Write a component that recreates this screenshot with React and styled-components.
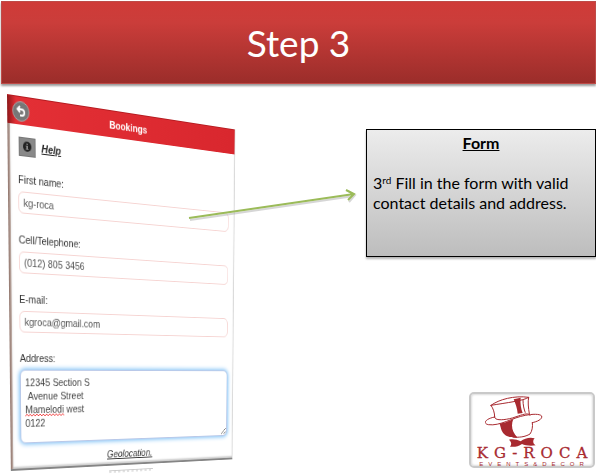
import React from "react";
import styled, { createGlobalStyle } from "styled-components";

const PageStyle = createGlobalStyle`
  *, *::before, *::after { box-sizing: border-box; }
  body { margin: 0; background: #fff; overflow-x: hidden; }
`;

const Slide = styled.div`
  min-height: 100vh;
  display: flex;
  flex-direction: column;
  font-family: Lato, "Open Sans", sans-serif;
  color: #000;
  overflow: hidden;
`;

const Banner = styled.header`
  display: flex;
  align-items: center;
  justify-content: center;
  height: 83px;
  margin: 1px 0 0 1px;
  border: 1px solid #be4b48;
  background: linear-gradient(#cf3b38 0%, #cb3d3a 25%, #9b2d2a 100%);
  box-shadow: 0 2px 2px rgba(0, 0, 0, 0.4);
`;

const Title = styled.h1`
  margin: 0;
  font-family: Lato, sans-serif;
  font-size: 37px;
  line-height: 44px;
  font-weight: 400;
  color: #fff;
`;

const Content = styled.main`
  position: relative;
  flex: 1;
  display: grid;
  grid-template-columns: minmax(0, 1fr) 230px;
  gap: 20px;
  padding: 10px 0 4px 7px;
`;

const Stage = styled.div`
  perspective: 1221px;
  perspective-origin: 123px 410px;
`;

const Phone = styled.form`
  position: relative;
  width: 301px;
  height: 378px;
  transform-origin: 0 0;
  transform: rotateX(-6deg) rotateY(36deg);
  background: #fff;
  border-right: 1px solid #d4d4d4;
  border-bottom: 2px solid #858585;
  box-shadow: inset 0 -2px 2px #ccc, inset 5px 0 3px -2px #ddd;
  font-family: "Liberation Sans", Arial, sans-serif;
  font-size: 11px;
  line-height: 16px;
  color: #333;

  &::before {
    content: "";
    position: absolute;
    inset: 0 auto 0 0;
    width: 3px;
    background: linear-gradient(90deg, #8d7067, #c5b5ae);
  }

  &::after {
    content: "";
    position: absolute;
    left: 124px;
    top: 383px;
    width: 60px;
    height: 3px;
    border-top: 1px solid #ccc;
    background: repeating-linear-gradient(90deg, #e2e2e2 0 3px, #fff 3px 6px);
  }
`;

const AppBar = styled.div`
  position: relative;
  height: 28px;
  display: grid;
  grid-template-columns: 24px 1fr 24px;
  align-items: center;
  padding: 0 6px;
  background: linear-gradient(90deg, #8d1719 0, #e32f35 10px, #d9272e 100%);
  border-top: 1px solid #b51b20;
  color: #fff;
  font-weight: 700;
  text-align: center;
`;

const BackButton = styled.button`
  display: grid;
  place-items: center;
  width: 20px;
  height: 20px;
  padding: 0;
  border: 1px solid #a8a8a8;
  border-radius: 50%;
  background: #777;
  color: #fff;
`;

const HelpRow = styled.div`
  display: flex;
  align-items: center;
  gap: 7px;
  height: 20px;
  margin: 11px 8px 15px 13px;
`;

const InfoBadge = styled.span`
  display: grid;
  place-items: center;
  width: 20px;
  height: 19px;
  background: #898989;
  border: 1px solid #777;
`;

const PanelLink = styled.a`
  color: ${(p) => (p.$strong ? "#222" : "#333")};
  font-style: italic;
  font-weight: ${(p) => (p.$strong ? 700 : 400)};
  font-size: 11px;
`;

const Fields = styled.div`
  display: flex;
  flex-direction: column;
  gap: 18px;
  margin: 0 8px 0 12px;
`;

const Field = styled.div`
  position: relative;
  display: flex;
  flex-direction: column;
  gap: 4px;
`;

const TextInput = styled.input`
  width: 100%;
  height: 22px;
  padding: 0 5px;
  border: 1px solid #f6d4d2;
  border-radius: 6px;
  background: #fff;
  font: inherit;
  color: #555;
  outline: none;
`;

const TextArea = styled.textarea`
  display: block;
  width: 100%;
  height: 76px;
  padding: 5px;
  border: 1px solid #b9c8e8;
  border-radius: 6px;
  background: #fff;
  box-shadow: 0 0 5px 1px #78bdf5;
  font: inherit;
  line-height: 14px;
  color: #444;
  outline: none;
  overflow: hidden;
`;

const Squiggle = styled.svg`
  position: absolute;
  left: 6px;
  top: 65px;
`;

const Footer = styled.div`
  display: flex;
  justify-content: center;
  padding: 7px 0 0 4px;
`;

const Side = styled.aside`
  display: flex;
  flex-direction: column;
  justify-content: space-between;
  padding-top: 35px;
`;

const Callout = styled.section`
  min-height: 128px;
  padding: 3px 6px;
  border: 1px solid #000;
  background: linear-gradient(#ececec, #bdbdbd);
  box-shadow: 0 2px 2px rgba(0, 0, 0, 0.3);
  font-size: 16px;
  line-height: 20px;
`;

const CalloutTitle = styled.h2`
  margin: 0 0 20px;
  font-size: 16px;
  line-height: 20px;
  text-align: center;
  text-decoration: underline;
`;

const CalloutText = styled.p`
  margin: 0;

  sup {
    font-size: 10px;
    line-height: 0;
    vertical-align: 5px;
  }
`;

const Logo = styled.div`
  align-self: flex-end;
  display: flex;
  flex-direction: column;
  align-items: center;
  width: 126px;
  height: 76px;
  margin: 0 1px 4px 0;
  padding-top: 1px;
  border: 2px solid #c9c9c9;
  border-radius: 5px;
  background: #fff;
  box-shadow: inset 0 0 2px 1px #ddd;
  color: #a82a30;
  white-space: nowrap;
  overflow: hidden;
`;

const HatMark = styled.svg`
  flex: none;
  margin-right: 36px;
`;

const BrandName = styled.div`
  padding-left: 6px;
  font-family: "DejaVu Serif", serif;
  font-size: 15px;
  line-height: 13px;
  letter-spacing: 6px;
  -webkit-text-stroke: 0.3px #a82a30;
`;

const BrandLine = styled.div`
  padding: 1px 0 0 4px;
  font-family: "Liberation Sans", sans-serif;
  font-size: 6px;
  line-height: 6px;
  letter-spacing: 5px;
`;

const Arrow = styled.svg`
  position: absolute;
  left: 186px;
  top: 100px;
  pointer-events: none;
`;

function LabeledInput({ id, label, type, value }) {
  return (
    <Field>
      <label htmlFor={id}>{label}</label>
      <TextInput id={id} type={type} defaultValue={value} />
    </Field>
  );
}

function BookingForm() {
  return (
    <Phone>
      <AppBar>
        <BackButton type="button" aria-label="Back">
          <svg width="12" height="12" viewBox="0 0 12 12" fill="none" stroke="currentColor" strokeWidth="2">
            <path d="M5 1 2 4l3 3M2 4h5a3 3 0 0 1 0 6H5" />
          </svg>
        </BackButton>
        <span>Bookings</span>
      </AppBar>
      <HelpRow>
        <InfoBadge>
          <svg width="12" height="12" viewBox="0 0 12 12">
            <circle cx="6" cy="6" r="5" fill="#222" />
            <path d="M5 3h2v1H5zM4.500 5H7v3h.5v1h-3V8H5V6h-.5z" fill="#898989" />
          </svg>
        </InfoBadge>
        <PanelLink href="#help" $strong>Help</PanelLink>
      </HelpRow>
      <Fields>
        <LabeledInput id="first" label="First name:" type="text" value="kg-roca" />
        <LabeledInput id="tel" label="Cell/Telephone:" type="tel" value="(012) 805 3456" />
        <LabeledInput id="email" label="E-mail:" type="email" value="kgroca@gmail.com" />
        <Field>
          <label htmlFor="address">Address:</label>
          <TextArea
            id="address"
            spellCheck={false}
            defaultValue={"12345 Section S\n Avenue Street\nMamelodi west\n0122"}
          />
          <Squiggle width="48" height="4" viewBox="0 0 48 4" fill="none" stroke="#f04040">
            <path d="M0 3l2-2 2 2 2-2 2 2 2-2 2 2 2-2 2 2 2-2 2 2 2-2 2 2 2-2 2 2 2-2 2 2 2-2 2 2 2-2 2 2 2-2 2 2 2-2 2 2" />
          </Squiggle>
        </Field>
      </Fields>
      <Footer>
        <PanelLink href="#geolocation">Geolocation.</PanelLink>
      </Footer>
    </Phone>
  );
}

function BrandLogo() {
  return (
    <Logo>
      <HatMark width="58" height="52" viewBox="76 45 174 156">
        <g fill="none" stroke="#a82a30" strokeWidth="3" strokeLinecap="round">
          <path d="M94 76C118 58 164 46 207 52C192 62 143 68 94 76" />
          <path d="M94 76C101 86 105 98 105 111M207 52C204 66 206 83 209 101" />
          <path d="M105 111C78 116 68 130 86 134C121 139 160 112 197 106C218 102 240 101 246 108C249 118 232 125 218 128" />
          <path d="M105 111C103 125 146 120 176 108C193 102 209 98 211 106" />
          <path d="M218 128C220 140 217 154 211 162C196 171 178 173 160 171" />
        </g>
        <path d="M119 130C130 132 151 122 161 117C153 137 157 157 174 173C158 174 142 171 134 163C123 153 124 140 119 130Z" fill="#a82a30" />
        <path d="M162 58L183 53C181 70 184 86 189 99L174 101C173 85 167 70 162 58Z" fill="#a82a30" />
        <path d="M190 60C190 75 193 88 197 98" stroke="#a82a30" strokeWidth="3" fill="none" />
        <path d="M148 179C161 176 173 179 183 184C195 174 212 171 225 175C218 182 220 192 228 196C211 199 196 196 187 192C177 199 164 202 151 200C157 193 155 186 148 179Z" fill="#a82a30" />
      </HatMark>
      <BrandName>KG-ROCA</BrandName>
      <BrandLine>EVENTS&amp;DECOR</BrandLine>
    </Logo>
  );
}

export default function App() {
  return (
    <Slide>
      <PageStyle />
      <Banner>
        <Title>Step 3</Title>
      </Banner>
      <Content>
        <Stage>
          <BookingForm />
        </Stage>
        <Side>
          <Callout>
            <CalloutTitle>Form</CalloutTitle>
            <CalloutText>
              3<sup>rd</sup> Fill in the form with valid contact details and address.
            </CalloutText>
          </Callout>
          <BrandLogo />
        </Side>
        <Arrow width="176" height="42" viewBox="0 0 176 42" fill="none">
          <path d="M4 36 168 12M162 7l7 4-6 7" stroke="#999" strokeWidth="2" opacity="0.4" />
          <path d="M3 34 168 10M160 6l8 4-6 6" stroke="#9bbb59" strokeWidth="2" />
        </Arrow>
      </Content>
    </Slide>
  );
}
